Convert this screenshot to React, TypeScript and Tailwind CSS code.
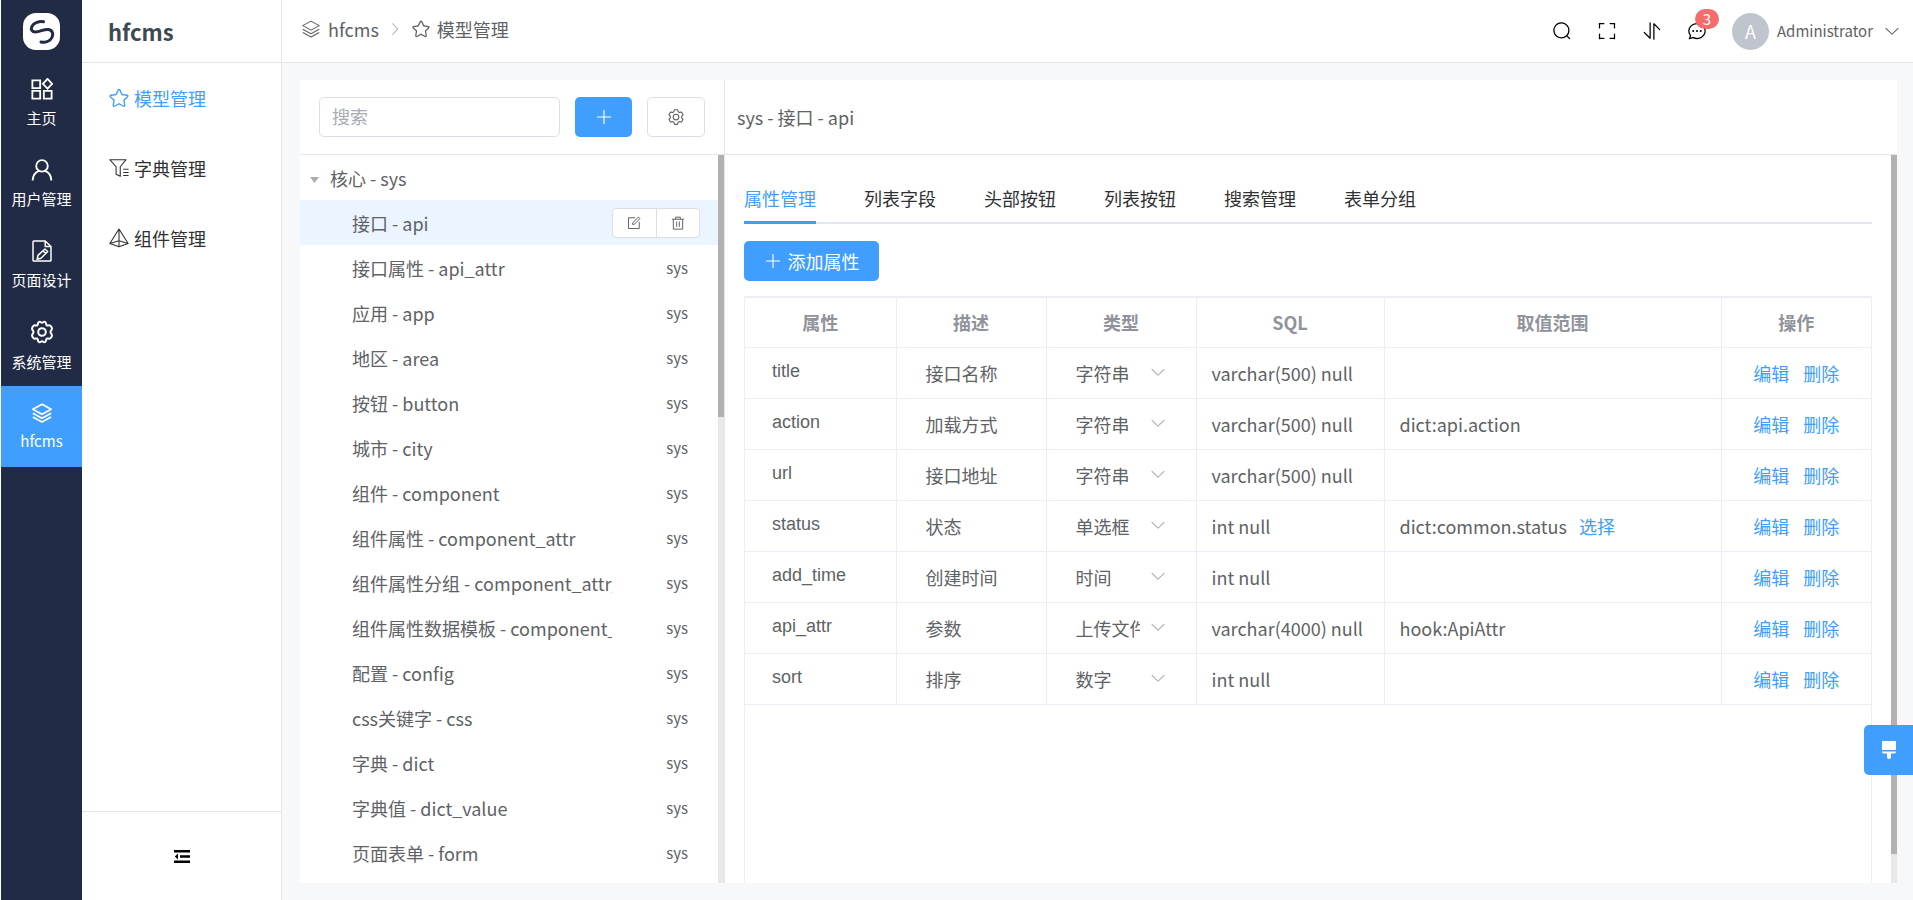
import React, { useState } from 'react';

interface IconProps {
  className?: string;
}

const PATHS = {
  plus: 'M480 480V128a32 32 0 0 1 64 0v352h352a32 32 0 1 1 0 64H544v352a32 32 0 1 1-64 0V544H128a32 32 0 0 1 0-64z',
  search:
    'm795.904 750.72 124.992 124.928a32 32 0 0 1-45.248 45.248L750.656 795.904a416 416 0 1 1 45.248-45.248zM480 832a352 352 0 1 0 0-704 352 352 0 0 0 0 704z',
  fullScreen:
    'm160 96.064 192 .192a32 32 0 0 1 0 64l-192-.192V352a32 32 0 0 1-64 0V96h64zm0 831.872V928H96V672a32 32 0 1 1 64 0v191.936l192-.192a32 32 0 1 1 0 64zM864 96.064V96h64v256a32 32 0 1 1-64 0V160.064l-192 .192a32 32 0 1 1 0-64zm0 831.872-192-.192a32 32 0 0 1 0-64l192 .192V672a32 32 0 1 1 64 0v256h-64z',
  sort: 'M384 96a32 32 0 0 1 64 0v786.752a32 32 0 0 1-54.592 22.656L95.936 608a32 32 0 0 1 0-45.312h.128a32 32 0 0 1 45.184 0L384 805.632zm192 45.248a32 32 0 0 1 54.592-22.592L928.064 416a32 32 0 0 1 0 45.312h-.128a32 32 0 0 1-45.184 0L640 218.496V928a32 32 0 1 1-64 0z',
  chat: 'm174.72 855.68 135.296-45.12 23.68 11.84C388.096 849.536 448.576 864 512 864c211.84 0 384-166.784 384-352S723.84 160 512 160 128 326.784 128 512c0 69.12 24.96 139.264 70.848 199.232l22.08 28.8-46.272 115.584zm-45.248 82.56A32 32 0 0 1 89.6 896l58.368-145.92C94.72 680.32 64 596.864 64 512 64 299.904 256 96 512 96s448 203.904 448 416-192 416-448 416a461.056 461.056 0 0 1-206.912-48.384l-175.616 58.56zM512 563.2a51.2 51.2 0 1 1 0-102.4 51.2 51.2 0 0 1 0 102.4zm192 0a51.2 51.2 0 1 1 0-102.4 51.2 51.2 0 0 1 0 102.4zm-384 0a51.2 51.2 0 1 1 0-102.4 51.2 51.2 0 0 1 0 102.4z',
  arrowDown:
    'M831.872 340.864 512 652.672 192.128 340.864a30.592 30.592 0 0 0-42.752 0 29.12 29.12 0 0 0 0 41.6L489.664 714.24a32 32 0 0 0 44.672 0l340.288-331.712a29.12 29.12 0 0 0 0-41.728 30.592 30.592 0 0 0-42.752 0z',
  arrowRight:
    'M340.864 149.312a30.592 30.592 0 0 0 0 42.752L652.736 512 340.864 831.872a30.592 30.592 0 0 0 0 42.752 29.12 29.12 0 0 0 41.728 0L714.24 534.336a32 32 0 0 0 0-44.672L382.592 149.376a29.12 29.12 0 0 0-41.728 0z',
  star: 'm512 747.84 228.16 119.936a6.4 6.4 0 0 0 9.28-6.72l-43.52-254.08 184.512-179.904a6.4 6.4 0 0 0-3.52-10.88l-255.104-37.12L517.76 147.904a6.4 6.4 0 0 0-11.52 0L392.192 379.072l-255.104 37.12a6.4 6.4 0 0 0-3.52 10.88L318.08 606.976l-43.584 254.08a6.4 6.4 0 0 0 9.28 6.72zM313.6 924.48a70.4 70.4 0 0 1-102.144-74.24l37.888-220.928L88.96 472.96A70.4 70.4 0 0 1 128 352.896l221.76-32.256 99.2-200.96a70.4 70.4 0 0 1 126.208 0l99.2 200.96 221.824 32.256a70.4 70.4 0 0 1 39.04 120.064L774.72 629.376l37.888 220.928a70.4 70.4 0 0 1-102.144 74.24L512 820.096l-198.4 104.32z',
  setting:
    'M600.704 64a32 32 0 0 1 30.464 22.208l35.2 109.376c14.784 7.232 28.928 15.36 42.432 24.512l112.384-24.192a32 32 0 0 1 34.432 15.36L944.32 364.8a32 32 0 0 1-4.032 37.504l-77.12 85.12a357.12 357.12 0 0 1 0 49.024l77.12 85.248a32 32 0 0 1 4.032 37.504l-88.704 153.6a32 32 0 0 1-34.432 15.296L708.8 803.904c-13.44 9.088-27.648 17.28-42.368 24.512l-35.264 109.376A32 32 0 0 1 600.704 960H423.296a32 32 0 0 1-30.464-22.208L357.696 828.48a351.616 351.616 0 0 1-42.56-24.64l-112.32 24.256a32 32 0 0 1-34.432-15.36L79.68 659.2a32 32 0 0 1 4.032-37.504l77.12-85.248a357.12 357.12 0 0 1 0-48.896l-77.12-85.248A32 32 0 0 1 79.68 364.8l88.704-153.6a32 32 0 0 1 34.432-15.296l112.32 24.256c13.568-9.152 27.776-17.408 42.56-24.64l35.2-109.312A32 32 0 0 1 423.232 64H600.64zm-23.424 64H446.72l-36.352 113.088-24.512 11.968a294.113 294.113 0 0 0-34.816 20.096l-22.656 15.36-116.224-25.088-65.28 113.152 79.68 88.192-1.92 27.136a293.12 293.12 0 0 0 0 40.192l1.92 27.136-79.808 88.192 65.344 113.152 116.224-25.024 22.656 15.296a294.113 294.113 0 0 0 34.816 20.096l24.512 11.968L446.72 896h130.688l36.48-113.152 24.448-11.904a288.282 288.282 0 0 0 34.752-20.096l22.592-15.296 116.288 25.024 65.28-113.152-79.744-88.192 1.92-27.136a293.12 293.12 0 0 0 0-40.256l-1.92-27.136 79.808-88.128-65.344-113.152-116.288 24.96-22.592-15.232a287.616 287.616 0 0 0-34.752-20.096l-24.448-11.904L577.344 128zM512 320a192 192 0 1 1 0 384 192 192 0 0 1 0-384zm0 64a128 128 0 1 0 0 256 128 128 0 0 0 0-256z',
};

function Icon({ name, className }: IconProps & { name: keyof typeof PATHS }) {
  return (
    <svg viewBox="0 0 1024 1024" fill="currentColor" className={className} aria-hidden="true">
      <path d={PATHS[name]} />
    </svg>
  );
}

// Outline icons share a 24 unit grid
function Outline({ className, width = 2, children }: IconProps & { width?: number; children: React.ReactNode }) {
  return (
    <svg
      viewBox="0 0 24 24"
      fill="none"
      stroke="currentColor"
      strokeWidth={width}
      strokeLinejoin="round"
      className={className}
      aria-hidden="true"
    >
      {children}
    </svg>
  );
}

function HomeIcon({ className }: IconProps) {
  return (
    <Outline className={className} width={2}>
      <path d="M1.500 2.500h8.500v8.500H1.500zM1.500 14h8.500v8.500H1.500zM14 14h8.500v8.500H14zM18 1l5 5.300-5 5.300-5-5.300z" strokeLinejoin="miter" />
    </Outline>
  );
}

function UserIcon({ className }: IconProps) {
  return (
    <Outline className={className} width={2}>
      <circle cx="12" cy="7.5" r="6.3" />
      <path d="M8.8 13C4.6 14.5 2 18.5 1.8 23.5M15.2 13c4.2 1.5 6.8 5.5 7 10.5" />
    </Outline>
  );
}

function PageIcon({ className }: IconProps) {
  return (
    <Outline className={className} width={1.6}>
      <path d="M15.5 1H3.2a1 1 0 0 0-1 1v20a1 1 0 0 0 1 1h17.600a1 1 0 0 0 1-1V7zM15.500 1v6h6.300" />
      <path d="m15.200 9.800 3 2.700-7.300 7.500-4.200 1 .9-4.200zM13.200 12l2.900 2.700" />
    </Outline>
  );
}

function GearIcon({ className }: IconProps) {
  return (
    <Outline className={className} width={2}>
      <path d="M8.500 2.400C10 .7 10.800 2.800 12 2.800s2-2.100 3.500-.4c.9 1 .4 2.300 1.300 2.900 1 .6 2.400-.5 3.600.4 1.200 1 1.700 2.300 1.500 3.300-.2 1.300-1.400 1.600-1.400 3s1.200 1.700 1.400 3c.2 1-.3 2.300-1.500 3.300-1.200.9-2.600-.2-3.600.4-.9.600-.4 1.900-1.300 2.900-1.500 1.700-2.300-.4-3.500-.4s-2 2.100-3.500.4c-.9-1-.4-2.300-1.300-2.900-1-.6-2.400.5-3.600-.4-1.200-1-1.700-2.300-1.500-3.300.2-1.300 1.400-1.600 1.400-3s-1.200-1.700-1.400-3c-.2-1 .3-2.300 1.500-3.300 1.200-.9 2.600.2 3.600-.4.9-.6.4-1.900 1.300-2.900z" />
      <circle cx="12" cy="12" r="3.800" />
    </Outline>
  );
}

function LayersIcon({ className, width = 2 }: IconProps & { width?: number }) {
  return (
    <Outline className={className} width={width}>
      <path d="M12 1.500 23 7.500l-11 6-11-6zM1 12.300l11 6 11-6M1 16.700l11 6 11-6" />
    </Outline>
  );
}

function FilterIcon({ className }: IconProps) {
  return (
    <Outline className={className} width={1.300}>
      <path d="M1 2h19.500l-7 8.500v11.500l-5-2.500v-9zM1 2l7.500 8.500M17 13.500h6.500M17 17.300h6.500M17 21h6.500" />
    </Outline>
  );
}

function PyramidIcon({ className }: IconProps) {
  return (
    <Outline className={className} width={1.300}>
      <path d="M12 1.200 1 18.500l11 4 11-4zM12 1.200v21.300M1 18.500l11-3.300 11 3.300" />
    </Outline>
  );
}

function EditIcon({ className }: IconProps) {
  return (
    <Outline className={className} width={1.700}>
      <path d="M14 3H2.500v18.500H21V10" />
      <path d="m9.500 14.500.6-3.300L19.600 1.800l2.700 2.700-9.500 9.400z" />
    </Outline>
  );
}

function TrashIcon({ className }: IconProps) {
  return (
    <Outline className={className} width={1.700}>
      <path d="M1.500 5.500h21M8 5.500V2h8v3.500M4 5.500v17h16v-17M9.700 9.500v9M14.300 9.500v9" />
    </Outline>
  );
}

function LogoIcon() {
  return (
    <svg viewBox="0 0 37 37" className="size-[37px]" role="img" aria-label="Logo">
      <rect width="37" height="37" rx="13" fill="#fff" />
      <path
        d="M20.500 8.800C16.500 8 11 9.500 9 13.200c-1.700 3.300.2 5.800 3.500 5.800 4.500 0 8.500-3.200 13-2.500 4.200.7 5 4.800 3.500 7.800-1.800 3.700-6.500 5.500-11 4.700"
        fill="none"
        stroke="#222b45"
        strokeWidth="3"
        strokeLinecap="round"
      />
    </svg>
  );
}

const modules = [
  { label: '主页', icon: <HomeIcon className="size-[22px]" /> },
  { label: '用户管理', icon: <UserIcon className="size-[22px]" /> },
  { label: '页面设计', icon: <PageIcon className="size-[22px]" /> },
  { label: '系统管理', icon: <GearIcon className="size-6" /> },
  { label: 'hfcms', icon: <LayersIcon className="size-5" /> },
];

const menus = [
  { label: '模型管理', icon: <Icon name="star" className="size-[22px]" /> },
  { label: '字典管理', icon: <FilterIcon className="size-5" /> },
  { label: '组件管理', icon: <PyramidIcon className="size-5" /> },
];

const models = [
  '接口 - api',
  '接口属性 - api_attr',
  '应用 - app',
  '地区 - area',
  '按钮 - button',
  '城市 - city',
  '组件 - component',
  '组件属性 - component_attr',
  '组件属性分组 - component_attr_',
  '组件属性数据模板 - component_',
  '配置 - config',
  'css关键字 - css',
  '字典 - dict',
  '字典值 - dict_value',
  '页面表单 - form',
];

const tabs = ['属性管理', '列表字段', '头部按钮', '列表按钮', '搜索管理', '表单分组'];

interface Attr {
  name: string;
  desc: string;
  type: string;
  sql: string;
  range?: string;
  selectable?: boolean;
}

const attrs: Attr[] = [
  { name: 'title', desc: '接口名称', type: '字符串', sql: 'varchar(500) null' },
  { name: 'action', desc: '加载方式', type: '字符串', sql: 'varchar(500) null', range: 'dict:api.action' },
  { name: 'url', desc: '接口地址', type: '字符串', sql: 'varchar(500) null' },
  { name: 'status', desc: '状态', type: '单选框', sql: 'int null', range: 'dict:common.status', selectable: true },
  { name: 'add_time', desc: '创建时间', type: '时间', sql: 'int null' },
  { name: 'api_attr', desc: '参数', type: '上传文件', sql: 'varchar(4000) null', range: 'hook:ApiAttr' },
  { name: 'sort', desc: '排序', type: '数字', sql: 'int null' },
];

const types = ['字符串', '单选框', '时间', '上传文件', '数字'];

function ModuleBar() {
  return (
    <nav className="ml-px flex w-[81px] shrink-0 flex-col bg-[#222b45] text-white">
      <div className="flex h-[62px] items-center justify-center">
        <LogoIcon />
      </div>
      {modules.map((item) => (
        <a
          key={item.label}
          href="#"
          className={`flex h-[81px] flex-col items-center justify-center gap-2 text-[15px] leading-5 ${
            item.label === 'hfcms' ? 'bg-[#409eff]' : ''
          }`}
        >
          {item.icon}
          <span>{item.label}</span>
        </a>
      ))}
    </nav>
  );
}

function SideMenu() {
  return (
    <aside className="flex w-[200px] shrink-0 flex-col border-r border-[#e6e6e6] bg-white">
      <h2 className="flex h-[63px] items-center border-b border-[#e6e6e6] px-[26px] text-[22px] font-bold text-[#3c4a54]">
        hfcms
      </h2>
      <div className="flex-1">
        {menus.map((item, i) => (
          <a
            key={item.label}
            href="#"
            className={`flex h-[70px] items-center px-[26px] text-lg ${i === 0 ? 'text-[#409eff]' : 'text-[#303133]'}`}
          >
            <span className="mr-1 flex w-[22px] justify-center">{item.icon}</span>
            {item.label}
          </a>
        ))}
      </div>
      <div className="flex h-[89px] items-center justify-center border-t border-[#e6e6e6]">
        <button type="button" aria-label="收起菜单">
          <svg viewBox="0 0 16 13" className="h-[13px] w-4" fill="#000" aria-hidden="true">
            <path d="M0 0h16v2.500H0zM6 5.200h10v2.500H6zM0 10.500h16V13H0zM4 3.500v6L.8 6.500z" />
          </svg>
        </button>
      </div>
    </aside>
  );
}

function TopBar() {
  return (
    <header className="flex h-[63px] shrink-0 items-center justify-between border-b border-[#e6e6e6] bg-white pr-3 pl-5">
      <div className="flex items-center pb-1 text-lg text-[#606266]">
        <LayersIcon className="size-[18px]" width={1.500} />
        <span className="ml-2">hfcms</span>
        <Icon name="arrowRight" className="mx-2 size-4 text-[#a8abb2]" />
        <Icon name="star" className="size-5" />
        <span className="ml-1.5">模型管理</span>
      </div>
      <div className="flex items-center text-black">
        <button type="button" aria-label="搜索" className="flex w-[45px] justify-center">
          <Icon name="search" className="size-5" />
        </button>
        <button type="button" aria-label="全屏" className="flex w-[45px] justify-center">
          <Icon name="fullScreen" className="size-5" />
        </button>
        <button type="button" aria-label="任务" className="flex w-[45px] justify-center">
          <Icon name="sort" className="size-5" />
        </button>
        <button type="button" aria-label="消息" className="relative flex w-[45px] justify-center">
          <Icon name="chat" className="size-5" />
          <span className="absolute -top-3 left-5 h-5 w-6 rounded-full bg-[#f56c6c] text-center text-[15px] leading-5 text-white">
            3
          </span>
        </button>
        <button type="button" className="ml-3 flex items-center text-[15px] text-[#606266]">
          <span className="flex size-[37px] items-center justify-center rounded-full bg-[#c0c4cc] text-lg text-white">A</span>
          <span className="ml-2">Administrator</span>
          <Icon name="arrowDown" className="ml-2.5 size-[18px]" />
        </button>
      </div>
    </header>
  );
}

function ModelTree() {
  return (
    <section className="flex w-[425px] shrink-0 flex-col border-r border-[#e6e6e6]">
      <div className="flex h-[75px] shrink-0 items-center gap-[15px] border-b border-[#e6e6e6] px-[19px]">
        <input
          type="text"
          placeholder="搜索"
          aria-label="搜索"
          className="h-10 min-w-0 flex-1 rounded-[5px] border border-[#dcdfe6] px-3 pb-0.5 text-lg leading-6 placeholder:text-[#a8abb2]"
        />
        <button
          type="button"
          aria-label="新增"
          className="flex h-10 w-[57px] items-center justify-center rounded-[5px] bg-[#409eff] text-white"
        >
          <Icon name="plus" className="size-[18px]" />
        </button>
        <button
          type="button"
          aria-label="设置"
          className="flex h-10 w-[58px] items-center justify-center rounded-[5px] border border-[#dcdfe6] text-[#606266]"
        >
          <Icon name="setting" className="size-[18px]" />
        </button>
      </div>
      <div className="flex min-h-0 flex-1">
        <div className="min-w-0 flex-1 overflow-hidden text-lg text-[#606266]">
          <div className="flex h-[45px] items-center pl-[10px]">
            <svg viewBox="0 0 9 6" className="mt-1 mr-[11px] h-1.5 w-[9px]" fill="#a8abb2" aria-hidden="true">
              <path d="M0 0h9L4.500 6z" />
            </svg>
            核心 - sys
          </div>
          {models.map((name, i) => (
            <div key={name} className={`flex h-[45px] items-center pr-[18px] pl-[52px] ${i === 0 ? 'bg-[#ebf5ff]' : ''}`}>
              <span className="w-[260px] overflow-hidden whitespace-nowrap">{name}</span>
              {i === 0 ? (
                <div className="flex h-[30px] w-[88px] divide-x divide-[#dcdfe6] rounded-[4px] border border-[#dcdfe6] bg-white">
                  <button type="button" aria-label="编辑" className="flex flex-1 items-center justify-center">
                    <EditIcon className="size-3.5" />
                  </button>
                  <button type="button" aria-label="删除" className="flex flex-1 items-center justify-center">
                    <TrashIcon className="size-3.5" />
                  </button>
                </div>
              ) : (
                <span className="flex-1 pr-3 text-right text-[15px]">sys</span>
              )}
            </div>
          ))}
        </div>
        <div className="w-1.5 bg-[#e8e8e8]">
          <div className="h-[36%] bg-[#b1b1b1]" />
        </div>
      </div>
    </section>
  );
}

function AttrRow({ attr }: { attr: Attr }) {
  return (
    <tr className="h-[51px] border-b border-[#ebeef5]">
      <td className="pl-[27px]">
        <input
          aria-label="属性"
          defaultValue={attr.name}
          className="block w-full pb-1 font-['Liberation_Sans',sans-serif]"
        />
      </td>
      <td className="border-l border-[#ebeef5] pl-[29px]">
        <input aria-label="描述" defaultValue={attr.desc} className="w-full" />
      </td>
      <td className="border-l border-[#ebeef5] pr-[29px] pl-[29px]">
        <div className="relative">
          <select aria-label="类型" defaultValue={attr.type} className="block w-full appearance-none pr-[27px]">
            {types.map((t) => (
              <option key={t}>{t}</option>
            ))}
          </select>
          <Icon name="arrowDown" className="pointer-events-none absolute top-0.5 right-0 size-[18px] text-[#a8abb2]" />
        </div>
      </td>
      <td className="border-l border-[#ebeef5] pl-[15px]">{attr.sql}</td>
      <td className="border-l border-[#ebeef5] pl-[15px]">
        {attr.range}
        {attr.selectable && (
          <a href="#" className="ml-3 text-[#409eff]">
            选择
          </a>
        )}
      </td>
      <td className="border-l border-[#ebeef5] text-[#409eff]">
        <div className="flex justify-center gap-3.5">
          <a href="#">编辑</a>
          <a href="#">删除</a>
        </div>
      </td>
    </tr>
  );
}

function AttrPanel() {
  const [active, setActive] = useState(0);

  return (
    <section className="flex min-w-0 flex-1 flex-col">
      <div className="flex h-[75px] shrink-0 items-center border-b border-[#e6e6e6] pl-3 text-lg text-[#606266]">
        sys - 接口 - api
      </div>
      <div className="flex min-h-0 flex-1">
        <div className="flex min-w-0 flex-1 flex-col overflow-hidden px-[19px] pt-5">
          <div role="tablist" className="flex gap-12 border-b-2 border-[#e4e7ed] text-lg">
            {tabs.map((tab, i) => (
              <button
                key={tab}
                type="button"
                role="tab"
                aria-selected={i === active}
                onClick={() => setActive(i)}
                className={`-mb-0.5 h-[49px] border-b-3 ${
                  i === active ? 'border-[#409eff] text-[#409eff]' : 'border-transparent text-[#303133]'
                }`}
              >
                {tab}
              </button>
            ))}
          </div>
          <button
            type="button"
            className="mt-[17px] flex h-10 w-[135px] shrink-0 items-center justify-center gap-1.5 rounded-[5px] bg-[#409eff] text-lg text-white"
          >
            <Icon name="plus" className="size-[18px]" />
            添加属性
          </button>
          <div className="mt-[15px] flex-1 overflow-hidden border-x border-t-2 border-[#ebeef5]">
            <table className="w-full table-fixed border-collapse text-lg leading-6 text-[#606266]">
              <colgroup>
                <col className="w-[151px]" />
                <col className="w-[150px]" />
                <col className="w-[150px]" />
                <col className="w-[188px]" />
                <col />
                <col className="w-[150px]" />
              </colgroup>
              <thead>
                <tr className="h-[49px] border-b border-[#ebeef5] text-[#909399]">
                  <th className="font-bold">属性</th>
                  <th className="border-l border-[#ebeef5] font-bold">描述</th>
                  <th className="border-l border-[#ebeef5] font-bold">类型</th>
                  <th className="border-l border-[#ebeef5] font-bold">SQL</th>
                  <th className="border-l border-[#ebeef5] font-bold">取值范围</th>
                  <th className="border-l border-[#ebeef5] font-bold">操作</th>
                </tr>
              </thead>
              <tbody>
                {attrs.map((attr) => (
                  <AttrRow key={attr.name} attr={attr} />
                ))}
              </tbody>
            </table>
          </div>
        </div>
        <div className="w-1.5 bg-[#e8e8e8]">
          <div className="h-[96%] bg-[#b1b1b1]" />
        </div>
      </div>
    </section>
  );
}

export default function App() {
  return (
    <div className="flex h-screen overflow-hidden bg-white font-['Noto_Sans_CJK_SC',sans-serif]">
      <ModuleBar />
      <SideMenu />
      <div className="flex min-w-0 flex-1 flex-col bg-[#f6f8f9]">
        <TopBar />
        <main className="flex min-h-0 flex-1 pt-[17px] pr-4 pb-[17px] pl-[18px]">
          <div className="flex min-w-0 flex-1 bg-white">
            <ModelTree />
            <AttrPanel />
          </div>
        </main>
      </div>
      <button
        type="button"
        aria-label="布局设置"
        className="fixed right-0 bottom-[125px] flex h-[50px] w-[49px] items-center justify-center rounded-l-[5px] bg-[#409eff] text-white"
      >
        <svg viewBox="0 0 14 18" className="h-[18px] w-3.5" fill="currentColor" aria-hidden="true">
          <path d="M0 0h14v9H0zM0 10.500h14c0 1.500-1 2-2 2H9V16a2 2 0 0 1-4 0v-3.500H2c-1 0-2-.5-2-2z" />
        </svg>
      </button>
    </div>
  );
}
